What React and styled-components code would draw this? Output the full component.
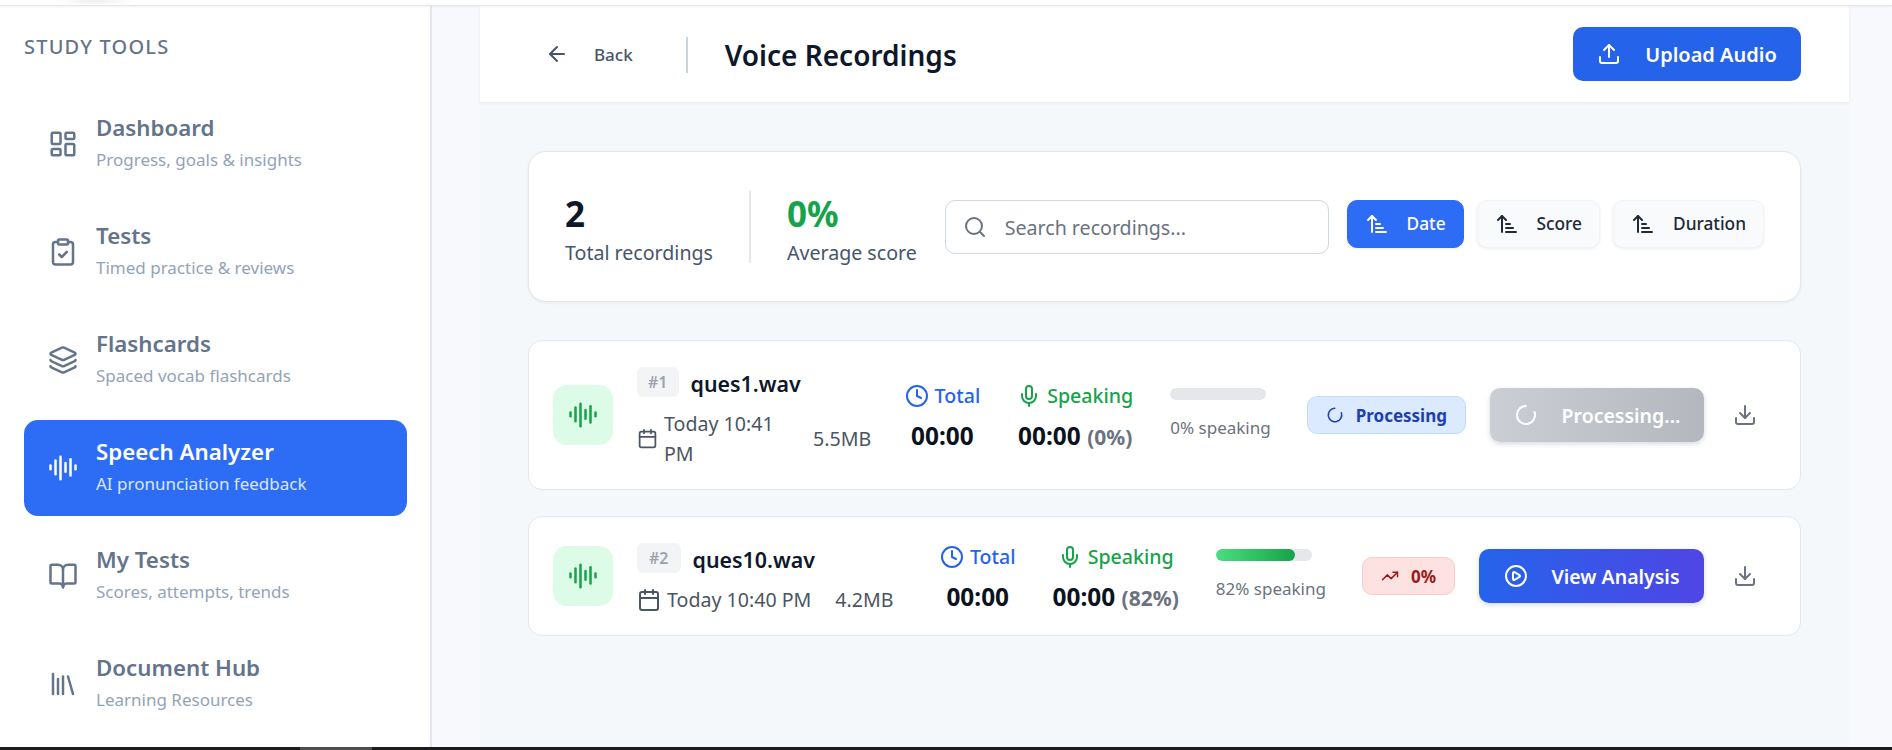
import React from 'react'
import styled, { createGlobalStyle } from 'styled-components'
import {
  ArrowLeft, ArrowUpNarrowWide, AudioLines, BookOpen, Calendar, CirclePlay, ClipboardCheck, Clock,
  Download, Layers, LayoutDashboard, Library, LoaderCircle, Mic, Search, TrendingUp, Upload,
} from 'lucide-react'

const GlobalStyle = createGlobalStyle`
  html, body { margin: 0; height: 100%; overflow: hidden; }
  #root { height: 100%; }
  * { box-sizing: border-box; }
  body { font-family: "Noto Sans", "Open Sans", Arial, sans-serif; color: #0f172a; background: #fff; }
`

const Page = styled.div`
  height: 100vh;
  display: flex;
  flex-direction: column;
`
const TopBar = styled.div`
  flex: 0 0 6px;
  background: radial-gradient(ellipse 40px 6px at 95px 0, #eceef0, #fff 100%);
  border-bottom: 1px solid #e5e7eb;
  box-shadow: 0 1px 2px rgba(15, 23, 42, 0.05);
  position: relative;
  z-index: 2;
`
const Body = styled.div`
  flex: 1;
  display: flex;
  min-height: 0;
`
const ScrollTrack = styled.div`
  flex: 0 0 3px;
  background: #1c1c1c;
  padding-left: 300px;
`
const ScrollThumb = styled.div`
  width: 72px;
  height: 100%;
  background: #4d4d4d;
`

const Sidebar = styled.aside`
  flex: 0 0 432px;
  background: #fff;
  border-right: 2px solid #e2e5ee;
  padding: 27px 23px 0 24px;
`
const SideHeading = styled.h2`
  margin: 0 0 36px;
  font-size: 20px;
  line-height: 27px;
  font-weight: 500;
  letter-spacing: 1.2px;
  color: #64748b;
  text-transform: uppercase;
`
const SideList = styled.nav`
  display: flex;
  flex-direction: column;
  gap: 12px;
`
const SideItem = styled.a`
  height: 96px;
  display: flex;
  align-items: center;
  gap: 18px;
  padding: 0 24px;
  border-radius: 14px;
  background: ${(p) => (p.$active ? '#2d6df6' : 'transparent')};
  color: ${(p) => (p.$active ? '#fff' : '#64748b')};
`
const SideText = styled.div`
  display: flex;
  flex-direction: column;
  gap: 7px;
  padding-bottom: 4px;
`
const SideTitle = styled.span`
  font-size: 22.3px;
  line-height: 29px;
  font-weight: 600;
`
const SideSub = styled.span`
  font-size: 17px;
  line-height: 22px;
  color: ${(p) => (p.$active ? '#dbe7ff' : '#94a3b8')};
`

const Main = styled.main`
  flex: 1;
  min-width: 0;
  background: #f8f9fc;
  padding: 0 43px 0 48px;
`
const Panel = styled.div`
  height: 100%;
  background: #f5f8fb;
`
const Header = styled.header`
  height: 96px;
  background: #fff;
  display: flex;
  align-items: center;
  padding: 2px 48px 0 65px;
  box-shadow: 0 1px 3px rgba(15, 23, 42, 0.07);
`
const BackLink = styled.a`
  display: flex;
  align-items: center;
  gap: 25px;
  margin-bottom: 2px;
  font-size: 17px;
  font-weight: 500;
  color: #475569;
`
const HeaderRule = styled.div`
  width: 2px;
  height: 36px;
  margin: 0 37px 0 53px;
  background: #cbd5e1;
`
const PageTitle = styled.h1`
  flex: 1;
  margin: 0;
  font-size: 28px;
  line-height: 38px;
  font-weight: 600;
  color: #0f172a;
`
const UploadButton = styled.button`
  height: 54px;
  width: 228px;
  margin-bottom: 2px;
  display: flex;
  align-items: center;
  justify-content: center;
  gap: 24px;
  border: 0;
  border-radius: 10px;
  background: #2563eb;
  color: #fff;
  font: 600 20px "Noto Sans", sans-serif;
`

const Content = styled.div`
  padding: 49px 48px 0 48px;
  display: flex;
  flex-direction: column;
  gap: 26px;
`
const StatsCard = styled.section`
  height: 151px;
  margin-bottom: 12px;
  display: flex;
  align-items: center;
  padding: 0 36px;
  background: #fff;
  border: 1px solid #e5e7eb;
  border-radius: 18px;
  box-shadow: 0 1px 3px rgba(15, 23, 42, 0.06);
`
const Stat = styled.div`
  display: flex;
  flex-direction: column;
  gap: 3px;
  margin-top: 5px;
`
const StatValue = styled.div`
  font-size: 35px;
  line-height: 44px;
  font-weight: 700;
  color: ${(p) => p.$color || '#0f172a'};
`
const StatLabel = styled.div`
  font-size: 19.6px;
  line-height: 28px;
  color: #475569;
`
const StatRule = styled.div`
  width: 2px;
  height: 72px;
  margin: 0 36px;
  background: #e5e7eb;
`
const SearchBox = styled.div`
  flex: 1;
  height: 54px;
  margin: 0 18px 0 28px;
  display: flex;
  align-items: center;
  gap: 18px;
  padding: 1px 17px 0;
  border: 1px solid #cfd8e3;
  border-radius: 10px;
  color: #6b7280;
  font-size: 19.6px;
`
const SortGroup = styled.div`
  display: flex;
  gap: 13px;
  margin-bottom: 6px;
`
const SortButton = styled.button`
  height: 48px;
  display: flex;
  align-items: center;
  gap: 18px;
  padding: 0 17px;
  border: 1px solid ${(p) => (p.$active ? '#2d6df6' : '#f1f5f9')};
  border-radius: 10px;
  background: ${(p) => (p.$active ? '#2d6df6' : '#f8fafc')};
  color: ${(p) => (p.$active ? '#fff' : '#1f2937')};
  font: 500 17.3px "Noto Sans", sans-serif;
  box-shadow: 0 1px 3px rgba(15, 23, 42, 0.08);
`

const RecordingCard = styled.article`
  height: ${(p) => p.$height}px;
  display: flex;
  align-items: center;
  padding: 0 37px 0 24px;
  background: #fff;
  border: 1px solid #e5e7eb;
  border-radius: 14px;
`
const WaveTile = styled.div`
  flex: 0 0 60px;
  height: 60px;
  margin-right: 24px;
  display: flex;
  align-items: center;
  justify-content: center;
  border-radius: 14px;
  background: #dcfce7;
  color: #16a34a;
`
const Info = styled.div`
  flex: 1;
  min-width: 0;
  display: flex;
  flex-direction: column;
  gap: 10px;
  padding-top: 3px;
`
const NameRow = styled.div`
  display: flex;
  align-items: center;
  gap: 12px;
`
const IndexBadge = styled.span`
  height: 30px;
  padding: 0 ${(p) => p.$pad}px;
  display: flex;
  align-items: center;
  border-radius: 6px;
  background: #f3f4f6;
  color: #9ca3af;
  font-size: 16px;
  font-weight: 600;
`
const FileName = styled.span`
  padding-top: 4px;
  font-size: 21.4px;
  line-height: 30px;
  font-weight: 600;
  color: #0f172a;
`
const MetaRow = styled.div`
  display: flex;
  align-items: center;
  gap: 24px;
  color: #4b5563;
  font-size: 19.6px;
  line-height: 30px;
`
const DateCell = styled.div`
  display: flex;
  align-items: center;
  gap: 6px;
`
const DateText = styled.span`
  width: ${(p) => p.$width || 'auto'};
`
const TimeColumn = styled.div`
  display: flex;
  flex-direction: column;
  align-items: center;
  gap: 12px;
  margin: 4px 37px 0 0;
`
const TimeLabel = styled.div`
  display: flex;
  align-items: center;
  gap: 6px;
  font-size: 19.6px;
  line-height: 26px;
  font-weight: 500;
  color: ${(p) => p.$color};
`
const TimeValue = styled.div`
  font-size: 24.4px;
  line-height: 30px;
  font-weight: 700;
  color: #0b1220;
`
const TimeShare = styled.span`
  font-size: 21px;
  font-weight: 700;
  color: #6b7280;
`
const SpeakColumn = styled.div`
  margin-right: 36px;
`
const Track = styled.div`
  width: 96px;
  height: 12px;
  margin-bottom: 14px;
  border-radius: 6px;
  overflow: hidden;
  background: #e5e7eb;
`
const Fill = styled.div`
  height: 100%;
  border-radius: 6px;
  background: linear-gradient(90deg, #4ade80, #16a34a);
`
const SpeakText = styled.div`
  font-size: 17px;
  line-height: 28px;
  color: #6b7280;
`
const StatusBadge = styled.div`
  height: 38px;
  display: flex;
  align-items: center;
  gap: 12px;
  padding: 0 18px;
  margin-right: 24px;
  border: 1px solid ${(p) => p.$border};
  border-radius: 10px;
  background: ${(p) => p.$bg};
  color: ${(p) => p.$color};
  font-size: 17px;
  font-weight: 700;
`
const ActionButton = styled.button`
  height: 54px;
  width: ${(p) => p.$width}px;
  display: flex;
  align-items: center;
  justify-content: center;
  gap: 24px;
  border: 0;
  border-radius: 10px;
  background: ${(p) => p.$bg};
  color: #fff;
  font: 600 19.5px "Noto Sans", sans-serif;
  box-shadow: 0 2px 5px rgba(15, 23, 42, 0.16);
`
const DownloadButton = styled.button`
  margin-left: 23px;
  padding: 6px;
  display: flex;
  border: 0;
  background: none;
  color: #6b7280;
`
const Spinner = styled(LoaderCircle)`
  transform: rotate(-20deg);
  flex-shrink: 0;
`

const tools = [
  { icon: LayoutDashboard, title: 'Dashboard', sub: 'Progress, goals & insights' },
  { icon: ClipboardCheck, title: 'Tests', sub: 'Timed practice & reviews' },
  { icon: Layers, title: 'Flashcards', sub: 'Spaced vocab flashcards' },
  { icon: AudioLines, title: 'Speech Analyzer', sub: 'AI pronunciation feedback', active: true },
  { icon: BookOpen, title: 'My Tests', sub: 'Scores, attempts, trends' },
  { icon: Library, title: 'Document Hub', sub: 'Learning Resources' },
]

const recordings = [
  {
    index: 1, badgePad: 11, name: 'ques1.wav', date: 'Today 10:41 PM', dateWidth: '125px', calendar: 21, size: '5.5MB',
    share: 0, height: 150, processing: true,
  },
  {
    index: 2, badgePad: 12, name: 'ques10.wav', date: 'Today 10:40 PM', calendar: 24, size: '4.2MB',
    share: 82, height: 120, processing: false,
  },
]

function Recording({ item }) {
  return (
    <RecordingCard $height={item.height}>
      <WaveTile><AudioLines size={30} /></WaveTile>
      <Info>
        <NameRow>
          <IndexBadge $pad={item.badgePad}>#{item.index}</IndexBadge>
          <FileName>{item.name}</FileName>
        </NameRow>
        <MetaRow>
          <DateCell>
            <Calendar size={item.calendar} />
            <DateText $width={item.dateWidth}>{item.date}</DateText>
          </DateCell>
          <span>{item.size}</span>
        </MetaRow>
      </Info>
      <TimeColumn>
        <TimeLabel $color="#2563eb"><Clock size={24} />Total</TimeLabel>
        <TimeValue>00:00</TimeValue>
      </TimeColumn>
      <TimeColumn>
        <TimeLabel $color="#16a34a"><Mic size={24} />Speaking</TimeLabel>
        <TimeValue>00:00 <TimeShare>({item.share}%)</TimeShare></TimeValue>
      </TimeColumn>
      <SpeakColumn>
        <Track><Fill style={{ width: `${item.share}%` }} /></Track>
        <SpeakText>{item.share}% speaking</SpeakText>
      </SpeakColumn>
      {item.processing ? (
        <StatusBadge $bg="#dbeafe" $border="#bfdbfe" $color="#1e40af">
          <Spinner size={18} />Processing
        </StatusBadge>
      ) : (
        <StatusBadge $bg="#fee2e2" $border="#fecaca" $color="#991b1b">
          <TrendingUp size={18} />0%
        </StatusBadge>
      )}
      {item.processing ? (
        <ActionButton $width={214} $bg="linear-gradient(90deg, #cbced5, #b4b7be)">
          <Spinner size={24} />Processing...
        </ActionButton>
      ) : (
        <ActionButton $width={225} $bg="linear-gradient(90deg, #2563eb, #4f46e5)">
          <CirclePlay size={24} />View Analysis
        </ActionButton>
      )}
      <DownloadButton><Download size={24} /></DownloadButton>
    </RecordingCard>
  )
}

export default function App() {
  return (
    <Page>
      <GlobalStyle />
      <TopBar />
      <Body>
        <Sidebar>
          <SideHeading>Study Tools</SideHeading>
          <SideList>
            {tools.map((tool) => (
              <SideItem key={tool.title} $active={tool.active}>
                <tool.icon size={30} />
                <SideText>
                  <SideTitle>{tool.title}</SideTitle>
                  <SideSub $active={tool.active}>{tool.sub}</SideSub>
                </SideText>
              </SideItem>
            ))}
          </SideList>
        </Sidebar>
        <Main>
          <Panel>
            <Header>
              <BackLink><ArrowLeft size={24} />Back</BackLink>
              <HeaderRule />
              <PageTitle>Voice Recordings</PageTitle>
              <UploadButton><Upload size={24} />Upload Audio</UploadButton>
            </Header>
            <Content>
              <StatsCard>
                <Stat>
                  <StatValue>2</StatValue>
                  <StatLabel>Total recordings</StatLabel>
                </Stat>
                <StatRule />
                <Stat>
                  <StatValue $color="#16a34a">0%</StatValue>
                  <StatLabel>Average score</StatLabel>
                </Stat>
                <SearchBox><Search size={24} />Search recordings...</SearchBox>
                <SortGroup>
                  <SortButton $active><ArrowUpNarrowWide size={24} />Date</SortButton>
                  <SortButton><ArrowUpNarrowWide size={24} />Score</SortButton>
                  <SortButton><ArrowUpNarrowWide size={24} />Duration</SortButton>
                </SortGroup>
              </StatsCard>
              {recordings.map((item) => <Recording key={item.index} item={item} />)}
            </Content>
          </Panel>
        </Main>
      </Body>
      <ScrollTrack><ScrollThumb /></ScrollTrack>
    </Page>
  )
}
